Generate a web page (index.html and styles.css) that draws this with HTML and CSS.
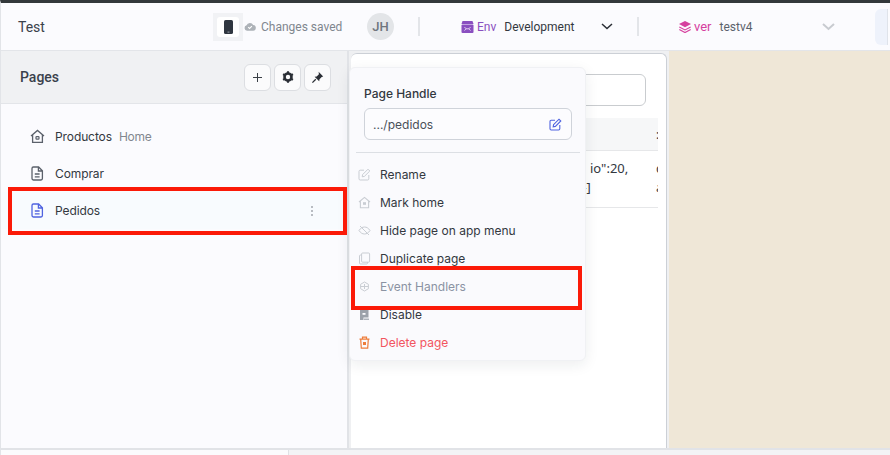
FILE: index.html
```html
<!DOCTYPE html>
<html lang="en">
<head>
  <meta charset="UTF-8" />
  <meta name="viewport" content="width=device-width, initial-scale=1.0" />
  <title>Test</title>
  <link rel="stylesheet" href="styles.css">
</head>
<body>
  <div class="app">
    <header class="topbar">
      <div class="app-name">Test</div>
      <div class="device-switch">
        <span class="device-btn">
          <svg width="9" height="14" viewBox="0 0 9 14"><rect x="0" y="0" width="9" height="14" rx="1.6" fill="#2f3640"/><rect x="3.500" y="11.600" width="2" height="1" fill="#9aa0a8"/></svg>
        </span>
      </div>
      <div class="saved">
        <svg width="12" height="9" viewBox="0 0 13 10"><path d="M3.2 9.6a3 3 0 0 1-.5-5.900A3.900 3.900 0 0 1 10 3.400a3.100 3.100 0 0 1-.2 6.200z" fill="#adb2b8"/><path d="M4.500 5.600l1.500 1.500 2.600-2.600" fill="none" stroke="#fff" stroke-width="1.200"/></svg>
        <span>Changes saved</span>
      </div>
      <div class="avatar">JH</div>
      <div class="vline vline-one"></div>
      <div class="env">
        <svg width="13" height="12" viewBox="0 0 13 12"><path d="M1.500 0h10l1 3H.5z" fill="#8a4fc0"/><rect x="0.500" y="3.600" width="12" height="8.400" rx="1" fill="#8a4fc0"/><path d="M3.500 6l1.500 1.800L3.500 9.600M9.500 6L8 7.800l1.500 1.800M5 7.800h3" fill="none" stroke="#e6d8f3" stroke-width="0.900"/></svg>
        <span class="env-label">Env</span>
        <span class="env-value">Development</span>
        <svg class="chev-env" width="12" height="7" viewBox="0 0 12 7"><path d="M1 1l5 4.600L11 1" fill="none" stroke="#2b2f36" stroke-width="1.500"/></svg>
      </div>
      <div class="vline vline-two"></div>
      <div class="ver">
        <svg width="12" height="12" viewBox="0 0 12 12"><path d="M6 0l6 3-6 3.200L0 3z" fill="#d6409f"/><path d="M0.300 6l5.700 3 5.700-3M0.300 8.600L6 11.600l5.700-3" fill="none" stroke="#d6409f" stroke-width="1.100"/></svg>
        <span class="ver-label">ver</span>
        <span class="ver-value">testv4</span>
        <svg class="chev-ver" width="13" height="8" viewBox="0 0 13 8"><path d="M1 1l5.500 5L12 1" fill="none" stroke="#c8cbd0" stroke-width="2"/></svg>
      </div>
      <div class="share-btn"></div>
    </header>

    <div class="main">
      <aside class="sidebar">
        <div class="side-head">
          <div class="side-title">Pages</div>
          <div class="side-tools">
            <span class="tool-btn">
              <svg width="11" height="11" viewBox="0 0 11 11"><path d="M5.500 1v9M1 5.500h9" stroke="#3a3f46" stroke-width="1"/></svg>
            </span>
            <span class="tool-btn">
              <svg width="12" height="12" viewBox="0 0 12 12"><circle cx="6" cy="6" r="3.500" fill="none" stroke="#2b2f36" stroke-width="2.600"/><path d="M6 .3v2.400M6 9.300v2.400M1.100 3.200l2 1.200M8.900 7.600l2 1.200M1.100 8.800l2-1.200M8.900 4.400l2-1.200" stroke="#2b2f36" stroke-width="2.100"/></svg>
            </span>
            <span class="tool-btn">
              <svg width="13" height="13" viewBox="0 0 13 13"><path d="M7.600.8l4.600 4.600-1.500.6-2.200 2.200-.3 2.100-4.600-4.600 2.100-.3 2.200-2.200z" fill="#2b2f36"/><path d="M4.800 8.200L1.400 11.600" stroke="#2b2f36" stroke-width="1.300"/></svg>
            </span>
          </div>
        </div>
        <ul class="page-list">
          <li class="page-row">
            <svg class="page-icon" width="15" height="15" viewBox="0 0 15 15"><path d="M1 7l6.500-5.600L14 7M2.600 6v7.400h9.800V6" fill="none" stroke="#5b616b" stroke-width="1.300"/><rect x="6" y="7.600" width="3" height="2.600" rx="0.600" fill="none" stroke="#5b616b" stroke-width="1.200"/></svg>
            <span class="page-name">Productos</span>
            <span class="page-tag">Home</span>
          </li>
          <li class="page-row">
            <svg class="page-icon" width="15" height="15" viewBox="0 0 15 15"><path d="M3.400 1h5.200L12.400 4.800V12.600a1.400 1.400 0 0 1-1.400 1.400H3.400A1.400 1.400 0 0 1 2 12.600V2.400A1.400 1.400 0 0 1 3.400 1zM8.400 1.200V5h3.800M4.800 8h4.800M4.800 10.800h4.800" fill="none" stroke="#5b616b" stroke-width="1.300"/></svg>
            <span class="page-name">Comprar</span>
          </li>
          <li class="page-row page-row-active">
            <svg class="page-icon" width="15" height="15" viewBox="0 0 15 15"><path d="M3.400 1h5.200L12.400 4.800V12.600a1.400 1.400 0 0 1-1.400 1.400H3.400A1.400 1.400 0 0 1 2 12.600V2.400A1.400 1.400 0 0 1 3.400 1zM8.400 1.200V5h3.800M4.800 8h4.800M4.800 10.800h4.800" fill="none" stroke="#4f63e0" stroke-width="1.300"/></svg>
            <span class="page-name">Pedidos</span>
            <span class="dots"><i></i><i></i><i></i></span>
          </li>
        </ul>
      </aside>

      <section class="stage">
        <div class="canvas">
          <div class="search-box"></div>
          <div class="table-head"><span class="cell-a"></span><span class="cell-b">:</span></div>
          <div class="table-row">
            <span class="cell-a">io":20,<br><span class="line-two">8}]</span></span>
            <span class="cell-b">c<br>a</span>
          </div>
        </div>
        <div class="backdrop"></div>
      </section>
    </div>

    <footer class="bottom">
      <div class="bottom-left"></div>
      <div class="bottom-right"></div>
    </footer>
  </div>

  <div class="popover">
    <div class="handle-title">Page Handle</div>
    <div class="handle-box">
      <span>.../pedidos</span>
      <svg width="13" height="13" viewBox="0 0 13 13"><path d="M6 2.200H2.200A1.200 1.200 0 0 0 1 3.400v7.400A1.200 1.200 0 0 0 2.200 12h7.400a1.200 1.200 0 0 0 1.200-1.200V7" fill="none" stroke="#4f63e0" stroke-width="1.100"/><path d="M4.600 6.600L10 1.200l1.800 1.800L6.400 8.400l-2.200.4z" fill="none" stroke="#4f63e0" stroke-width="1.100"/></svg>
    </div>
    <div class="pop-divider"></div>
    <ul class="pop-menu">
      <li class="pop-item">
        <svg width="13" height="13" viewBox="0 0 13 13"><path d="M6 2.200H2.200A1.200 1.200 0 0 0 1 3.400v7.400A1.200 1.200 0 0 0 2.200 12h7.400a1.200 1.200 0 0 0 1.200-1.200V7" fill="none" stroke="#c9cdd3" stroke-width="1"/><path d="M4.600 6.600L10 1.200l1.800 1.800L6.400 8.400l-2.200.4z" fill="none" stroke="#c9cdd3" stroke-width="1"/></svg>
        <span>Rename</span>
      </li>
      <li class="pop-item">
        <svg width="13" height="13" viewBox="0 0 13 13"><path d="M1 6l5.500-4.600L12 6M2.400 5.200v6.600h8.200V5.200" fill="none" stroke="#c9cdd3" stroke-width="1.100"/><rect x="5" y="6.200" width="3" height="2.600" fill="#c9cdd3"/></svg>
        <span>Mark home</span>
      </li>
      <li class="pop-item">
        <svg width="13" height="13" viewBox="0 0 13 13"><path d="M1 6.500C2.600 4 4.400 3 6.500 3s3.900 1 5.500 3.500C10.400 9 8.600 10 6.500 10S2.600 9 1 6.500zM2 2l9 9" fill="none" stroke="#c9cdd3" stroke-width="1"/></svg>
        <span>Hide page on app menu</span>
      </li>
      <li class="pop-item">
        <svg width="13" height="13" viewBox="0 0 13 13"><rect x="3.600" y="1" width="8" height="9.200" rx="1" fill="none" stroke="#c9cdd3" stroke-width="1"/><path d="M3.600 3H2.500A1 1 0 0 0 1.500 4v7a1 1 0 0 0 1 1h6a1 1 0 0 0 1-1v-.8" fill="none" stroke="#c9cdd3" stroke-width="1"/></svg>
        <span>Duplicate page</span>
      </li>
      <li class="pop-item pop-item-muted">
        <svg width="13" height="13" viewBox="0 0 13 13"><path d="M6.500 2l3.900 2.300v4.400L6.500 11 2.600 8.700V4.300z" fill="none" stroke="#c9cdd3" stroke-width="1"/><path d="M2.600 6.500h7.800M6.500 4v5" stroke="#c9cdd3" stroke-width="1"/></svg>
        <span>Event Handlers</span>
      </li>
      <li class="pop-item">
        <svg width="13" height="13" viewBox="0 0 13 13"><path d="M2 1.500h8.500v8H5.500v2.500H2z" fill="#9ca2aa"/><rect x="6" y="10.600" width="5" height="1.200" fill="#9ca2aa"/><rect x="4.500" y="5" width="3" height="1.800" fill="#fbfbfd"/></svg>
        <span>Disable</span>
      </li>
      <li class="pop-item pop-item-danger">
        <svg width="13" height="13" viewBox="0 0 13 13"><path d="M1.500 3.200h10M4.500 3V1.200h4V3M2.700 3.200l.6 9h6.400l.6-9" fill="none" stroke="#ee7d3b" stroke-width="1.200"/><rect x="5" y="6" width="3" height="3" fill="#ee7d3b"/></svg>
        <span>Delete page</span>
      </li>
    </ul>
  </div>

  <div class="mark mark-page"></div>
  <div class="mark mark-event"></div>
</body>
</html>
```

FILE: styles.css
```css
* {
  box-sizing: border-box;
}

html, body {
  margin: 0;
  padding: 0;
  width: 890px;
  height: 455px;
  overflow: hidden;
}

body {
  font-family: Inter, "Liberation Sans", sans-serif;
  font-size: 12px;
  color: #2f343b;
  background-color: #fff;
  position: relative;
}

ul {
  list-style: none;
  margin: 0;
  padding: 0;
}

.app {
  display: flex;
  flex-direction: column;
  height: 455px;
  border-top: 3px solid #33383b;
  border-left: 1px solid #e2e4e8;
}

/* top bar */
.topbar {
  display: flex;
  align-items: center;
  height: 48px;
  flex: none;
  background-color: #fbfbfe;
  border-bottom: 1px solid #e3e5e9;
  font-family: Roboto, sans-serif;
  font-size: 12px;
}

.topbar > * {
  flex: none;
}

.app-name {
  width: 212px;
  padding-left: 17px;
  font-size: 14px;
  color: #3a414b;
}

.device-switch {
  width: 30px;
  height: 28px;
  padding: 4px;
  background-color: #f1f2f5;
}

.device-btn {
  display: flex;
  align-items: center;
  justify-content: center;
  width: 22px;
  height: 20px;
  background-color: #fff;
  border-radius: 3px;
}

.saved {
  display: flex;
  align-items: center;
  gap: 5px;
  width: 123px;
  margin-left: 1px;
  color: #80868e;
}

.avatar {
  display: flex;
  align-items: center;
  justify-content: center;
  width: 27px;
  height: 27px;
  border-radius: 50%;
  background-color: #e3e5e8;
  color: #70767e;
  font-size: 13px;
  font-weight: 500;
}

.vline {
  width: 2px;
  height: 19px;
  background-color: #e3e5e9;
}

.vline-one {
  margin-left: 24px;
}

.vline-two {
  margin-left: 20px;
}

.env {
  display: flex;
  align-items: center;
  width: 156px;
  margin-left: 41px;
}

.env-label {
  margin-left: 3px;
  color: #8a4fc0;
}

.env-value {
  margin-left: 8px;
  color: #33383f;
}

.chev-env {
  margin-left: 27px;
}

.ver {
  display: flex;
  align-items: center;
  width: 184px;
  margin-left: 40px;
}

.ver-label {
  margin-left: 3px;
  font-size: 13px;
  color: #d6409f;
}

.ver-value {
  margin-left: 8px;
  color: #5b626c;
}

.chev-ver {
  margin-left: 70px;
}

.share-btn {
  width: 13px;
  height: 36px;
  margin-left: 12px;
  background-color: #eef2fb;
  border-radius: 6px 0 0 6px;
  border-right: 1px solid #dfe3ea;
}

/* sidebar */
.main {
  display: flex;
  flex: 1;
  min-height: 0;
}

.sidebar {
  width: 348px;
  flex: none;
  background-color: #fbfbfe;
  border-right: 2px solid #e1e3e7;
}

.side-head {
  display: flex;
  align-items: center;
  justify-content: space-between;
  height: 53px;
  padding: 0 16px 0 19px;
  background-color: #f0f1f3;
  border-bottom: 1px solid #e3e5e9;
}

.side-title {
  margin-bottom: 1px;
  font-family: Roboto, sans-serif;
  font-size: 14px;
  font-weight: 500;
  color: #3a414b;
}

.side-tools {
  display: flex;
  gap: 3px;
}

.tool-btn {
  display: flex;
  align-items: center;
  justify-content: center;
  width: 27px;
  height: 27px;
  background-color: #fbfbfc;
  border: 1px solid #dcdee2;
  border-radius: 6px;
}

.page-list {
  padding-top: 14px;
}

.page-row {
  display: flex;
  align-items: center;
  height: 37px;
  padding-left: 29px;
}

.page-row-active {
  background-color: #f8fbfe;
}

.page-icon {
  margin-right: 10px;
}

.page-name {
  color: #33383f;
  letter-spacing: -0.1px;
}

.page-tag {
  margin-left: 7px;
  color: #82878f;
  letter-spacing: -0.3px;
}

.dots {
  display: flex;
  flex-direction: column;
  gap: 2px;
  margin-left: auto;
  margin-right: 34px;
}

.dots i {
  width: 2px;
  height: 2px;
  background-color: #b8bcc2;
}

/* canvas */
.stage {
  display: flex;
  flex: 1;
  padding-left: 2px;
  background-color: #eff0f2;
}

.canvas {
  width: 316px;
  margin-top: 2px;
  padding: 20px 8px 0 0;
  background-color: #fff;
  border: 1px solid #ccd0d6;
  border-left: none;
  border-bottom: none;
  border-radius: 6px 6px 0 0;
  overflow: hidden;
  font-family: "Noto Sans", Inter, sans-serif;
  color: #33383f;
}

.backdrop {
  flex: 1;
  margin-left: 2px;
  background-color: #efe7d7;
}

.search-box {
  width: 160px;
  height: 32px;
  margin-left: 135px;
  border: 1px solid #c9cccf;
  border-radius: 6px;
}

.table-head {
  display: flex;
  height: 33px;
  margin-top: 12px;
  background-color: #f6f7f8;
  border-bottom: 1px solid #e6e7e9;
  align-items: center;
  overflow: hidden;
}

.table-row {
  display: flex;
  height: 57px;
  padding-top: 8px;
  border-bottom: 1px solid #e6e7e9;
  line-height: 19px;
  font-size: 13px;
  overflow: hidden;
}

.cell-a {
  width: 305px;
  padding-left: 239px;
  flex: none;
}

.cell-b {
  flex: none;
}

.line-two {
  margin-left: -16px;
}

/* bottom strip */
.bottom {
  display: flex;
  height: 7px;
  flex: none;
  border-top: 2px solid #e1e3e7;
  background-color: #f3f4f6;
}

.bottom-left {
  width: 288px;
  background-color: #fbfbfd;
  border-right: 1px solid #dfe1e5;
}

.bottom-right {
  flex: 1;
}

/* popover */
.popover {
  position: absolute;
  left: 349px;
  top: 67px;
  width: 237px;
  height: 294px;
  padding: 18px 13px 0 14px;
  background-color: #fafafd;
  border: 1px solid #f0f1f4;
  border-radius: 6px;
  box-shadow: 0 4px 14px rgba(30, 35, 45, 0.08);
  color: #33383f;
}

.handle-title {
  font-weight: 500;
  line-height: 15px;
}

.handle-box {
  display: flex;
  align-items: center;
  justify-content: space-between;
  height: 32px;
  margin-top: 7px;
  padding: 0 9px 0 8px;
  background-color: #fcfcfe;
  border: 1px solid #cfd3da;
  border-radius: 6px;
  color: #4a5059;
}

.pop-divider {
  height: 1px;
  margin: 12px -8px 0 -8px;
  background-color: #dcdfe4;
}

.pop-menu {
  padding-top: 7px;
}

.pop-item {
  display: flex;
  align-items: center;
  gap: 9px;
  height: 28px;
  margin-left: -6px;
}

.pop-item-muted {
  color: #8b93a3;
}

.pop-item-danger {
  color: #f2555f;
}

/* red marks over the shot */
.mark {
  position: absolute;
  border: 4px solid #fb1a08;
}

.mark-page {
  left: 8px;
  top: 187px;
  width: 339px;
  height: 48px;
}

.mark-event {
  left: 351px;
  top: 266px;
  width: 231px;
  height: 44px;
}
```
